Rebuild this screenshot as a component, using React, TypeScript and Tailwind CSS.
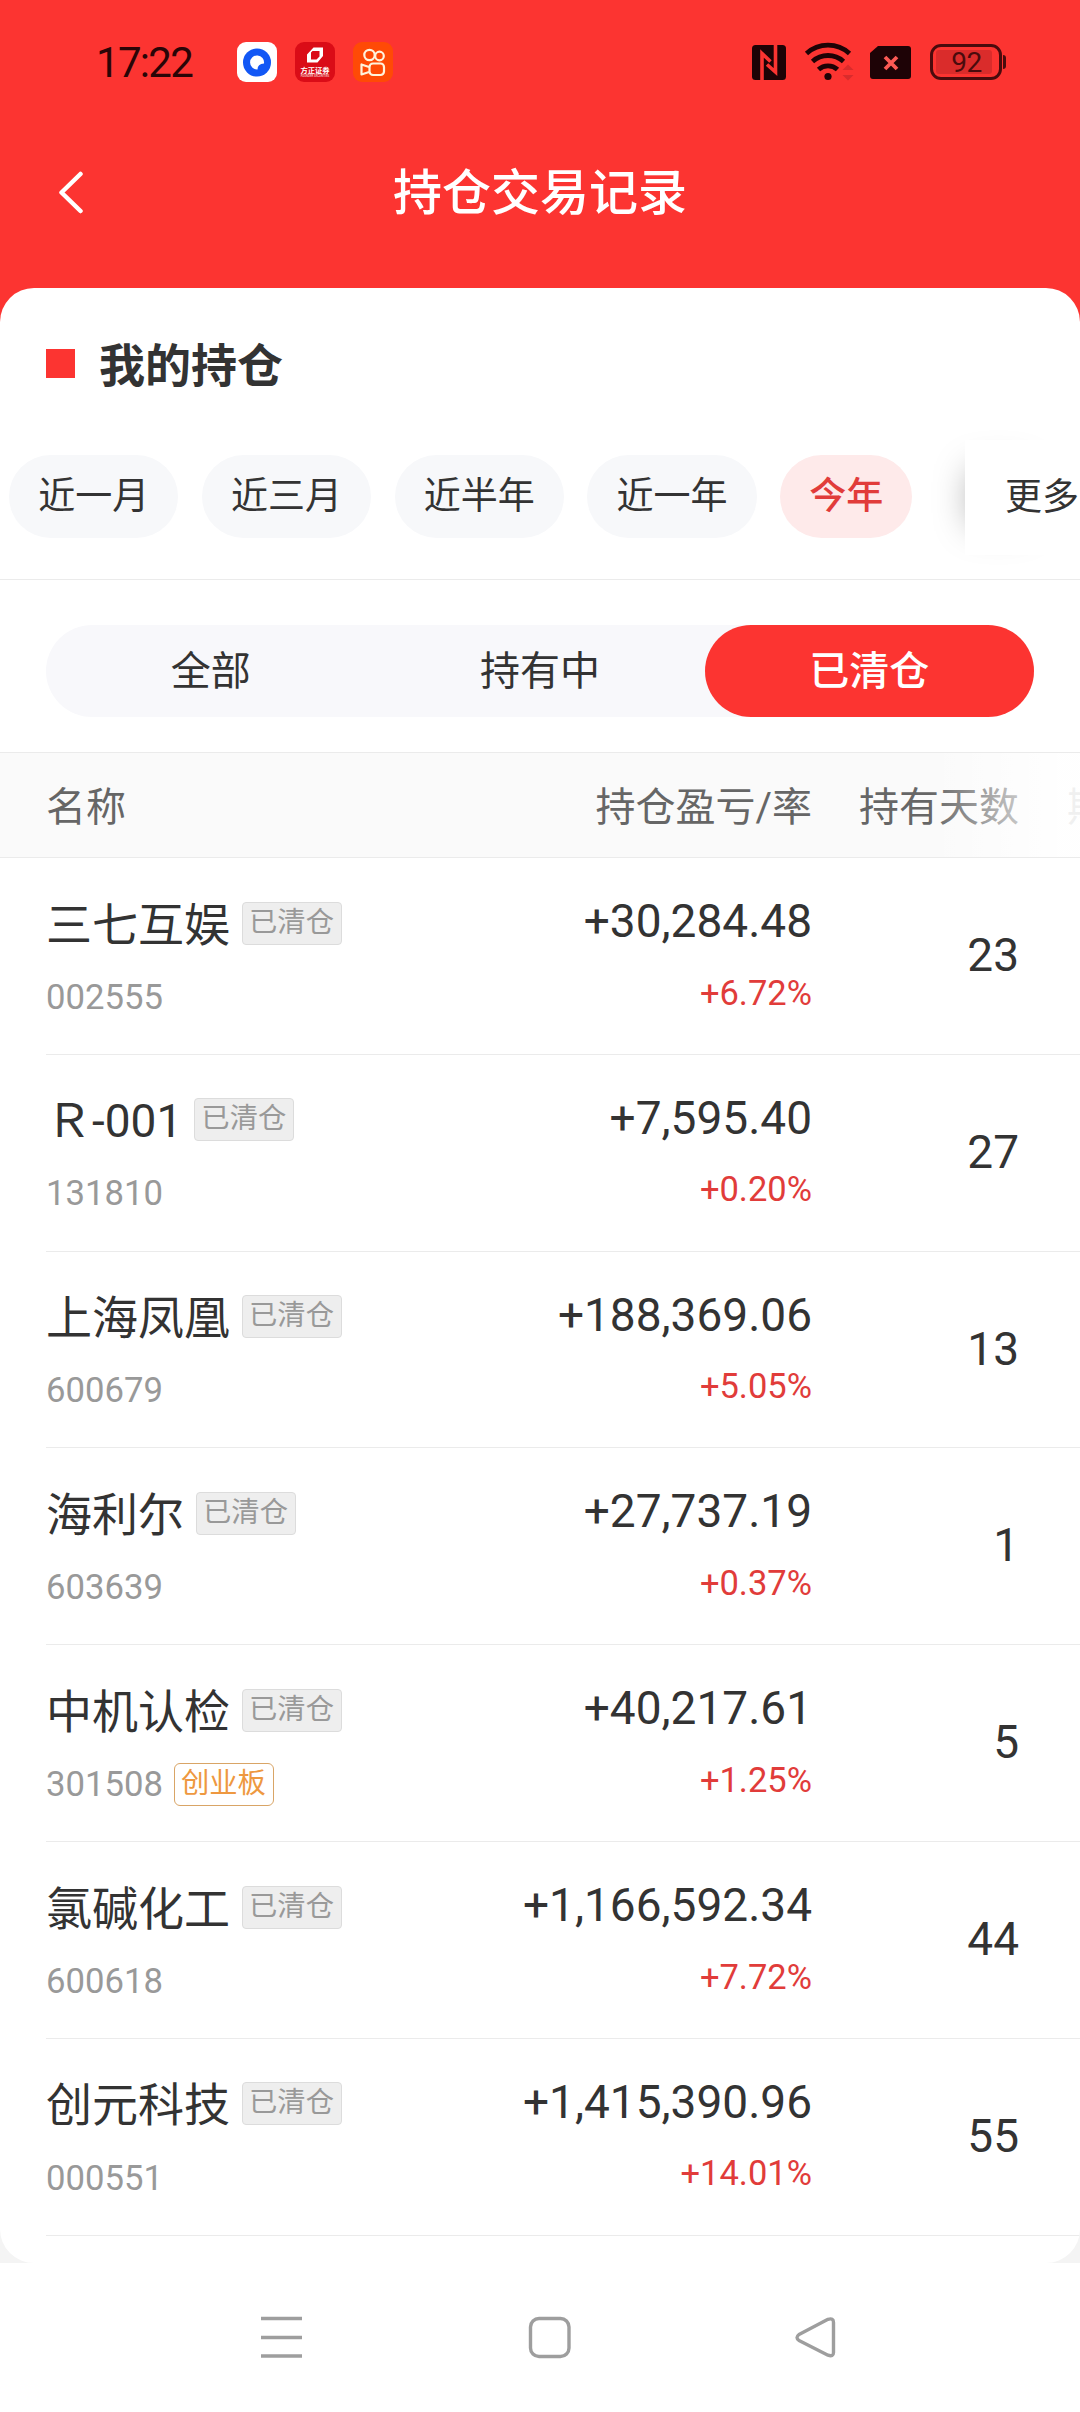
import React from 'react';

interface Holding {
  name: string;
  code: string;
  profit: string;
  rate: string;
  days: number;
  board?: string; // extra market tag next to the code
}

const holdings: Holding[] = [
  { name: '三七互娱', code: '002555', profit: '+30,284.48', rate: '+6.72%', days: 23 },
  { name: 'Ｒ-001', code: '131810', profit: '+7,595.40', rate: '+0.20%', days: 27 },
  { name: '上海凤凰', code: '600679', profit: '+188,369.06', rate: '+5.05%', days: 13 },
  { name: '海利尔', code: '603639', profit: '+27,737.19', rate: '+0.37%', days: 1 },
  { name: '中机认检', code: '301508', profit: '+40,217.61', rate: '+1.25%', days: 5, board: '创业板' },
  { name: '氯碱化工', code: '600618', profit: '+1,166,592.34', rate: '+7.72%', days: 44 },
  { name: '创元科技', code: '000551', profit: '+1,415,390.96', rate: '+14.01%', days: 55 },
];

const ranges = ['近一月', '近三月', '近半年', '近一年', '今年'];
const tabs = ['全部', '持有中', '已清仓'];

const StatusBar: React.FC = () => (
  <div className="flex h-[124px] items-center justify-between pl-[96px] pr-[74px] text-[#2a0507]">
    <div className="flex items-center">
      <span className="w-[141px] pt-[2px] text-[42px] leading-none tracking-[-1.7px]">17:22</span>
      <div className="flex gap-[18px]">
        <svg width="40" height="40" viewBox="0 0 40 40">
          <rect width="40" height="40" rx="9" fill="#fff" />
          <circle cx="20" cy="20.5" r="14" fill="#1257f5" />
          <path d="M27 21.500A7 7 0 1 0 20.500 27.500Q20.500 22 27 21.500Z" fill="#fff" />
        </svg>
        <svg width="40" height="40" viewBox="0 0 40 40">
          <rect width="40" height="40" rx="9" fill="#da0c17" />
          <path d="M18.500 5.500H28V14L22.500 20.500H12V12.500ZM16 10.500V17.500H21.500L24.500 14.500V9H17.500Z" fill="#fff" fillRule="evenodd" />
          <text x="20" y="31" fontSize="7.300" fontWeight="700" fill="#fff" textAnchor="middle">方正证券</text>
          <text x="20" y="35.200" fontSize="2.800" fontWeight="500" fill="#fff" fillOpacity="0.800" textAnchor="middle">FOUNDER SECURITIES</text>
        </svg>
        <svg width="40" height="40" viewBox="0 0 40 40" fill="none" stroke="#fff3dc" strokeWidth="2.200">
          <rect width="40" height="40" rx="9" fill="#ff4a06" stroke="none" />
          <circle cx="16.500" cy="13" r="5.200" />
          <circle cx="26.500" cy="14" r="4.300" />
          <rect x="16.500" y="21.500" width="14.500" height="11.500" rx="3.500" />
          <path d="M16 25L8.500 22.500V32.500L16 30" strokeLinejoin="round" />
        </svg>
      </div>
    </div>
    <div className="flex items-center">
      <svg width="34" height="35" viewBox="0 0 34 35">
        <rect width="34" height="35" rx="3.500" fill="#1e0306" />
        <path d="M10 35V8.500L18.500 16.500M23.500 0V27L15 19.500" fill="none" stroke="#fc3431" strokeWidth="3.600" />
      </svg>
      <svg className="ml-[18px]" width="52" height="42" viewBox="0 0 52 42" fill="none" stroke="#1e0306" strokeWidth="4.800">
        <path d="M2.500 12.500A32 32 0 0 1 45.500 12.500" />
        <path d="M8.500 20.500A23 23 0 0 1 39.500 20.500" />
        <path d="M14.500 28.500A14 14 0 0 1 33.500 28.500" />
        <circle cx="24" cy="35.500" r="3.600" fill="#1e0306" stroke="none" />
        <path d="M38.500 29L44 23.500L49.500 29ZM38.500 34L44 39.500L49.500 34Z" fill="#d92c2c" stroke="none" />
      </svg>
      <svg className="ml-[14px]" width="41" height="33" viewBox="0 0 41 33">
        <path d="M8 0H38Q41 0 41 3V30Q41 33 38 33H3Q0 33 0 30V7Z" fill="#1e0306" />
        <path d="M15 11L27 23M27 11L15 23" stroke="#fc5a55" strokeWidth="3.800" />
      </svg>
      <div className="ml-[19px] flex h-9 w-[72px] items-center rounded-[11px] border-[3px] border-[#4a0b0d] p-[3px]">
        <div className="flex h-6 w-14 items-center justify-center rounded-[3px] bg-[#da2c2b] pl-[5px] pt-[2px] text-[28px] leading-none tracking-[-0.5px] text-[#4a0b0d]">
          92
        </div>
      </div>
      <div className="ml-px h-3.5 w-[3px] rounded-r-sm bg-[#4a0b0d]" />
    </div>
  </div>
);

const Tag: React.FC<{ label: string; className: string }> = ({ label, className }) => (
  <span className={`flex h-[43px] w-[100px] justify-center border pr-px text-[28.3px] leading-[40px] ${className}`}>{label}</span>
);

const HoldingRow: React.FC<{ item: Holding }> = ({ item }) => (
  <div className="ml-[46px] flex h-[196.83px] shrink-0 border-b border-[#ebebeb]">
    <div className="flex w-[325px] flex-col pt-[43.5px]">
      <div className="flex h-[46px] items-start gap-3">
        <span className="whitespace-nowrap text-[46px] leading-[47px] text-[#333]">{item.name}</span>
        <Tag label="已清仓" className="rounded-[4px] border-[#dcdcdc] bg-[#eee] text-[#999]" />
      </div>
      <div className="mt-7 flex h-[43px] items-center gap-[11px]">
        <span className="text-[34.7px] leading-none text-[#999]">{item.code}</span>
        {item.board && <Tag label={item.board} className="rounded-[6px] border-[#d9a566] text-[#ee9840]" />}
      </div>
    </div>
    <div className="flex w-[441px] flex-col items-end pt-[40px]">
      <span className="text-[46px] leading-[46px] text-[#333]">{item.profit}</span>
      <span className="mt-[31.5px] text-[34.5px] leading-[35px] text-[#e13c3a]">{item.rate}</span>
    </div>
    <div className="flex w-[207px] items-center justify-end pb-[2px] text-[46px] leading-none text-[#333]">{item.days}</div>
  </div>
);

const App: React.FC = () => {
  const activeRange = '今年';
  const activeTab = '已清仓';

  return (
    <div className="flex h-[2412px] w-[1080px] flex-col overflow-hidden bg-white font-[Roboto,'Noto_Sans_CJK_SC',sans-serif]">
      <div className="flex h-[2263px] flex-col bg-[linear-gradient(#fc3431_50%,#f4f4f4_50%)]">
        <StatusBar />

        <header className="grid h-[136px] grid-cols-[120px_1fr_120px] items-center text-white">
          <svg className="ml-[58px]" width="26" height="44" viewBox="0 0 26 44" fill="none" stroke="currentColor" strokeWidth="4.500" strokeLinecap="round" strokeLinejoin="round">
            <path d="M22.500 4L3.500 22.500L22.500 41" />
          </svg>
          <h1 className="pt-[2px] text-center text-[49px] font-medium leading-none">持仓交易记录</h1>
        </header>

        <main className="mt-7 flex h-[1975px] flex-col overflow-hidden rounded-[34px] bg-white">
          <div className="flex h-[152px] items-center gap-[24px] pl-[46px]">
            <span className="mb-[2px] h-[29px] w-[29px] bg-[#fc3431]" />
            <h2 className="pt-[4px] text-[46px] font-bold leading-none text-[#333]">我的持仓</h2>
          </div>

          {/* Time range filter */}
          <div className="flex h-[140px] border-b border-[#ebebeb] pb-6">
            <div className="flex items-center gap-[23.4px] pb-[2px] pl-[9px]">
              {ranges.map((range) => (
                <button
                  key={range}
                  className={`h-[83px] whitespace-nowrap rounded-full px-[29.200px] text-[37px] leading-none ${
                    range === activeRange ? 'bg-[#feeaea] font-medium text-[#e13c3a]' : 'bg-[#f7f8fa] text-[#333]'
                  }`}
                >
                  {range}
                </button>
              ))}
            </div>
            <button className="ml-auto w-[115px] whitespace-nowrap bg-white pl-[40px] text-left text-[37px] leading-none text-[#333] shadow-[-24px_0_36px_-30px_rgba(0,0,0,0.35)]">
              更多
            </button>
          </div>

          {/* Status tabs */}
          <div className="mx-[46px] mt-[45px] grid h-[92px] grid-cols-3 rounded-full bg-[#f8f8fb]">
            {tabs.map((tab) => (
              <button
                key={tab}
                className={`rounded-full pt-[2px] text-[40px] leading-none ${
                  tab === activeTab ? 'bg-[#fc3431] font-medium text-white' : 'text-[#333]'
                }`}
              >
                {tab}
              </button>
            ))}
          </div>

          {/* Table header, fades out where more columns follow */}
          <div className="relative mt-[35px] flex h-[106px] shrink-0 items-center border-y border-[#ebebeb] bg-[#fafafa] pl-[46px] pt-[6px] text-[40px] leading-none text-[#666]">
            <span className="w-[325px] shrink-0">名称</span>
            <span className="w-[441px] shrink-0 text-right">持仓盈亏/率</span>
            <span className="w-[207px] shrink-0 text-right">持有天数</span>
            <span className="ml-[48px] shrink-0 whitespace-nowrap">期</span>
            <div className="absolute inset-y-0 right-0 w-[150px] bg-[linear-gradient(to_right,transparent,rgba(255,255,255,0.9)_85%)]" />
          </div>

          {holdings.map((item) => (
            <HoldingRow key={item.code} item={item} />
          ))}
        </main>
      </div>

      {/* System navigation */}
      <nav className="flex h-[149px] bg-white">
        <svg width="1080" height="149" viewBox="0 0 1080 149" fill="none" stroke="#9e9e9e" strokeWidth="3.400" strokeLinejoin="round">
          <path d="M261 55.500H302M261 74.500H302M261 93H302" />
          <rect x="530.500" y="55.500" width="38.500" height="38" rx="8.500" />
          <path d="M828 56.300L799 71.500Q795 74.500 799 77.500L828 92.200Q833.500 94 833.500 89.500V59.500Q833.500 54.500 828 56.300Z" />
        </svg>
      </nav>
    </div>
  );
};

export default App;
